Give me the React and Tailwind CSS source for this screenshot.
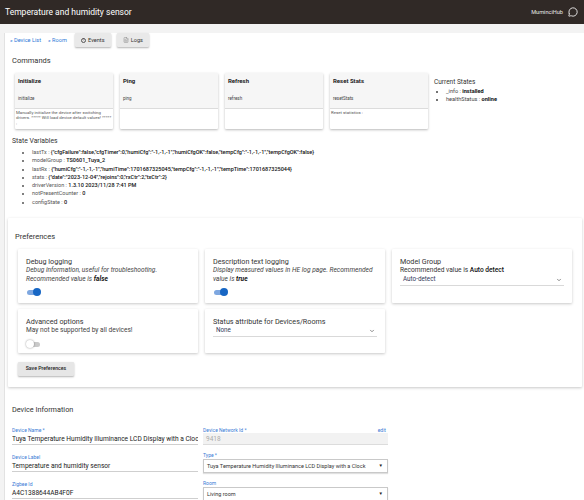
import { MessageCircle, ChevronDown, FileText } from 'lucide-react';

const commands = [
  { title: 'Initialize', name: 'initialize', desc: 'Manually initialize the device after switching drivers. ***** Will load device default values! ***** :' },
  { title: 'Ping', name: 'ping', desc: '' },
  { title: 'Refresh', name: 'refresh', desc: '' },
  { title: 'Reset Stats', name: 'resetStats', desc: 'Reset statistics :' },
];

const stateVars = [
  ['lastTx', '{"cfgFailure":false,"cfgTimer":0,"humiCfg":"-1,-1,-1","humiCfgOK":false,"tempCfg":"-1,-1,-1","tempCfgOK":false}'],
  ['modelGroup', 'TS0601_Tuya_2'],
  ['lastRx', '{"humiCfg":"-1,-1,-1","humiTime":1701687325045,"tempCfg":"-1,-1,-1","tempTime":1701687325044}'],
  ['stats', '{"date":"2023-12-04","rejoins":0,"rxCtr":2,"txCtr":2}'],
  ['driverVersion', '1.3.10 2023/11/28 7:41 PM'],
  ['notPresentCounter', '0'],
  ['configState', '0'],
];

const Toggle = ({ on }) => (
  <div className="relative w-[15px] h-[8px] flex items-center">
    <div className={`w-[13px] h-[5px] rounded-full ml-[1px] ${on ? 'bg-[#7ea7e0]' : 'bg-[#c9c9c9]'}`} />
    <div
      className={`absolute top-0 w-[8px] h-[8px] rounded-full ${on ? 'right-0 bg-[#1766c4]' : 'left-0 bg-white shadow-[0_0_2px_rgba(0,0,0,0.45)]'}`}
    />
  </div>
);

const UnderlineSelect = ({ value }) => (
  <div className="flex items-center justify-between h-[11px] pl-[3px] pr-[2px] border-b border-[#d9d9d9] text-[6.3px] text-[#33395a]">
    <span>{value}</span>
    <ChevronDown className="w-[6px] h-[6px] text-[#666]" strokeWidth={3} />
  </div>
);

const PrefCard = ({ h, children }) => (
  <div className={`bg-white rounded-[1px] shadow-[0_1px_3px_rgba(0,0,0,0.22)] px-[8px] pt-[8px] ${h}`}>
    {children}
  </div>
);

const Label = ({ children }) => (
  <div className="h-[6px] leading-[6px] text-[5px] text-[#3a7bd5]">{children}</div>
);

export default function App() {
  return (
    <div className="min-h-screen bg-[#f3f3f3] font-['Roboto','Liberation_Sans',sans-serif] text-[#333]">
      {/* Header */}
      <header className="h-[24px] bg-[#302926] flex items-center justify-between pl-[5px] pr-[6px]">
        <span className="text-[8.5px] text-white">Temperature and humidity sensor</span>
        <div className="flex items-center gap-[5px]">
          <span className="text-[5.6px] text-[#e8e8e8]">MuminciHub</span>
          <MessageCircle className="w-[10px] h-[10px] text-white" strokeWidth={2} />
        </div>
      </header>

      <div className="pt-[7px] pl-[4px]">
        <div className="bg-white border-l border-[#e2e2e2] pb-[20px]">
          {/* Links row */}
          <div className="flex items-center h-[14px] mt-[2px] pl-[5px] gap-[5px]">
            <span className="text-[5.6px] text-[#2f7ad8]">« Device List</span>
            <span className="text-[5.6px] text-[#2f7ad8] ml-[2px]">« Room</span>
            <button type="button" className="ml-[3px] h-[14px] w-[36px] flex items-center justify-center gap-[2px] bg-[#e9e9e9] shadow-[0_1px_2px_rgba(0,0,0,0.3)] rounded-[1px] text-[5.6px] text-[#333]">
              <span className="w-[5px] h-[5px] rounded-full border-[0.7px] border-[#555] text-[3.5px] leading-[4px] flex items-center justify-center font-bold">!</span>
              Events
            </button>
            <button type="button" className="ml-[1px] h-[14px] w-[32px] flex items-center justify-center gap-[2px] bg-[#e9e9e9] shadow-[0_1px_2px_rgba(0,0,0,0.3)] rounded-[1px] text-[5.6px] text-[#333]">
              <FileText className="w-[6px] h-[6px] text-[#888]" strokeWidth={2} />
              Logs
            </button>
          </div>

          {/* Commands */}
          <div className="mt-[9px] pl-[7px] h-[10px] leading-[10px] text-[7.5px] text-[#333]">Commands</div>
          <div className="flex mt-[7px] pl-[10px] gap-[7px]">
            {commands.map((c) => (
              <div key={c.name} className="w-[98px] h-[56px] bg-white shadow-[0_1px_2.5px_rgba(0,0,0,0.28)] rounded-[1px] flex flex-col">
                <div className="h-[36px] bg-[#f6f6f6] border-b border-[#dcdcdc] flex flex-col justify-between pt-[4px] pb-[6px] px-[3px]">
                  <span className="text-[6px] leading-[8px] font-bold text-[#222]">{c.title}</span>
                  <span className="text-[4.5px] leading-[6px] text-[#444]">{c.name}</span>
                </div>
                <p className="px-[1px] pt-[1px] text-[4.35px] leading-[5.4px] text-[#555]">{c.desc}</p>
              </div>
            ))}
            <div className="ml-[-1px] pt-[5px]">
              <div className="text-[6.5px] leading-[9px] text-[#333]">Current States</div>
              <ul className="mt-[1px] pl-[12px] list-disc text-[5.6px] leading-[7.5px] text-[#444]">
                <li>_info : <span className="font-bold text-[#111]">installed</span></li>
                <li>healthStatus : <span className="font-bold text-[#111]">online</span></li>
              </ul>
            </div>
          </div>

          {/* State Variables */}
          <div className="mt-[8px] pl-[7px] text-[6.8px] leading-[9px] text-[#333]">State Variables</div>
          <ul className="mt-[2px] pl-[27px] list-disc text-[5.5px] leading-[8.3px] text-[#555] whitespace-nowrap">
            {stateVars.map(([k, v]) => (
              <li key={k}>
                {k} : <span className="font-medium text-[#111]">{v}</span>
              </li>
            ))}
          </ul>

          {/* Preferences */}
          <div className="mt-[12px] ml-[3px] mr-[2px] bg-white shadow-[0_1px_3px_rgba(0,0,0,0.22)] rounded-[1px] pt-[14px] pb-[10px]">
            <div className="pl-[7px] text-[7.5px] leading-[10px] text-[#333]">Preferences</div>
            <div className="mt-[7px] pl-[10px] grid grid-cols-[180px_180px_180px] gap-x-[7px] gap-y-[6px]">
              <PrefCard h="h-[54px]">
                <div className="text-[7.2px] leading-[9px] text-[#333]">Debug logging</div>
                <div className="text-[6.6px] leading-[9px] italic text-[#444]">
                  Debug information, useful for troubleshooting. Recommended value is <span className="font-bold text-[#111]">false</span>
                </div>
                <div className="mt-[4px]"><Toggle on /></div>
              </PrefCard>
              <PrefCard h="h-[54px]">
                <div className="text-[7.2px] leading-[9px] text-[#333]">Description text logging</div>
                <div className="text-[6.6px] leading-[9px] italic text-[#444]">
                  Display measured values in HE log page. Recommended value is <span className="font-bold text-[#111]">true</span>
                </div>
                <div className="mt-[4px]"><Toggle on /></div>
              </PrefCard>
              <PrefCard h="h-[54px]">
                <div className="text-[7.2px] leading-[9px] text-[#333]">Model Group</div>
                <div className="text-[6.6px] leading-[9px] text-[#333]">
                  Recommended value is <span className="font-medium text-[#111]">Auto detect</span>
                </div>
                <UnderlineSelect value="Auto-detect" />
              </PrefCard>
              <PrefCard h="h-[44px]">
                <div className="text-[7.2px] leading-[9px] text-[#333]">Advanced options</div>
                <div className="text-[6.6px] leading-[9px] text-[#444]">May not be supported by all devices!</div>
                <div className="mt-[5px]"><Toggle /></div>
              </PrefCard>
              <PrefCard h="h-[44px]">
                <div className="text-[7.2px] leading-[9px] text-[#333]">Status attribute for Devices/Rooms</div>
                <UnderlineSelect value="None" />
              </PrefCard>
            </div>
            <button type="button" className="mt-[7px] ml-[10px] w-[56px] h-[14px] bg-[#e6e6e6] shadow-[0_1px_2px_rgba(0,0,0,0.3)] rounded-[1px] text-[5.2px] font-medium text-[#222]">
              Save Preferences
            </button>
          </div>

          {/* Device Information */}
          <div className="mt-[18px] pl-[7px] text-[7.3px] leading-[10px] text-[#333]">Device Information</div>
          <div className="mt-[12px] pl-[7px] flex gap-[5px]">
            <div className="w-[186px] flex flex-col gap-[9px]">
              <div>
                <Label>Device Name *</Label>
                <div className="h-[12px] border-b border-[#cfcfcf] text-[6.6px] leading-[12px] text-[#222] whitespace-nowrap overflow-hidden">
                  Tuya Temperature Humidity Illuminance LCD Display with a Clock
                </div>
              </div>
              <div>
                <Label>Device Label</Label>
                <div className="h-[12px] border-b border-[#cfcfcf] text-[6.6px] leading-[12px] text-[#222]">Temperature and humidity sensor</div>
              </div>
              <div>
                <Label>Zigbee Id</Label>
                <div className="h-[12px] border-b border-[#cfcfcf] text-[6.6px] leading-[12px] text-[#222]">A4C1388644AB4F0F</div>
              </div>
            </div>
            <div className="w-[185px] flex flex-col gap-[7px]">
              <div>
                <div className="flex justify-between items-end">
                  <Label>Device Network Id *</Label>
                  <span className="text-[5px] leading-[6px] text-[#3a7bd5] -mt-[2px] mr-[2px]">edit</span>
                </div>
                <div className="h-[12px] bg-[#f2f2f2] border-b border-[#dcdcdc] pl-[3px] text-[6.5px] leading-[12px] text-[#aaa]">9418</div>
              </div>
              <div>
                <Label>Type *</Label>
                <div className="mt-[1px] h-[14px] border border-[#c9c9c9] shadow-[0_1px_1px_rgba(0,0,0,0.12)] flex items-center justify-between pl-[3px] pr-[4px] text-[5.5px] text-[#333]">
                  <span className="whitespace-nowrap">Tuya Temperature Humidity Illuminance LCD Display with a Clock</span>
                  <span className="text-[4.5px] text-[#222]">▼</span>
                </div>
              </div>
              <div>
                <Label>Room</Label>
                <div className="mt-[1px] h-[15px] border border-[#c9c9c9] shadow-[0_1px_1px_rgba(0,0,0,0.12)] flex items-center justify-between pl-[3px] pr-[4px] text-[5.5px] text-[#333]">
                  <span>Living room</span>
                  <span className="text-[4.5px] text-[#222]">▼</span>
                </div>
              </div>
            </div>
          </div>
        </div>
      </div>
    </div>
  );
}
